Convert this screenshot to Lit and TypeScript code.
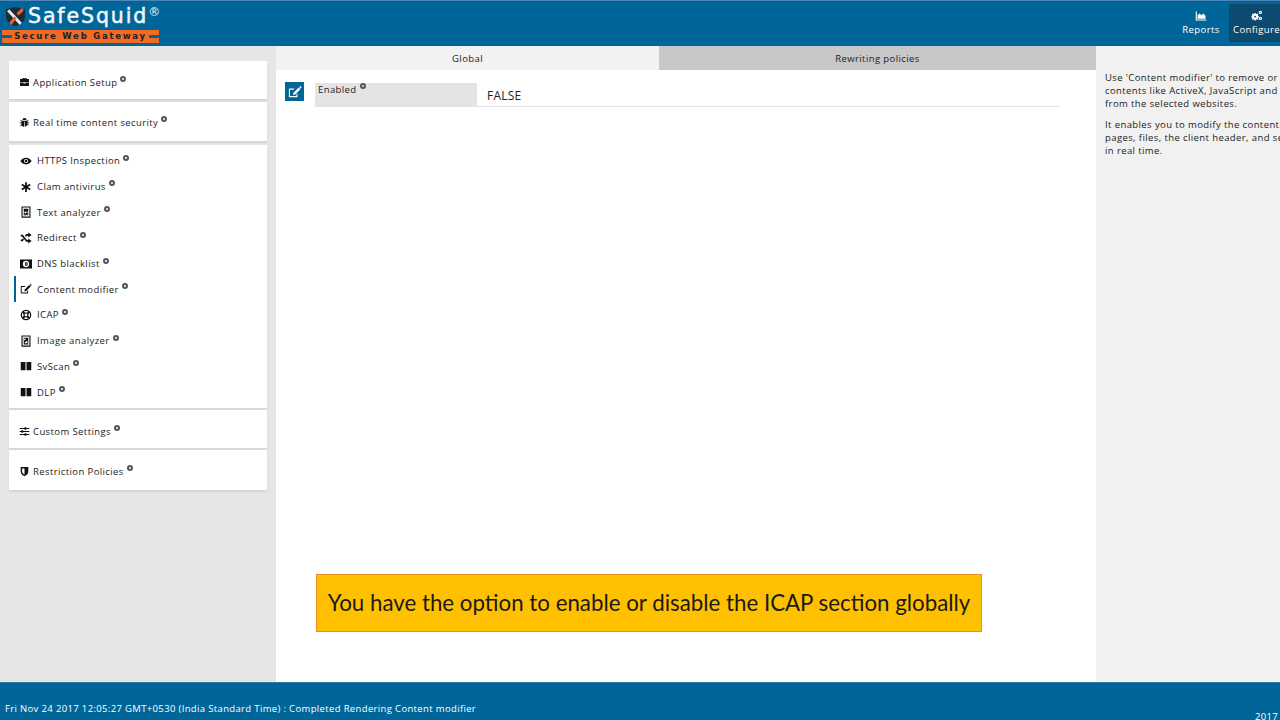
import { LitElement, html, css, svg } from "lit";
import { customElement } from "lit/decorators.js";

const I: Record<string, any> = {
  briefcase: svg`<path d="M5 3V1.500h6V3h3.500v4.500h-13V3zM6.300 3h3.400v-.6H6.300zM1.500 8.500h5v1h3v-1h5V13h-13z"/>`,
  bug: svg`<path d="M5 4.500a3 3 0 0 1 6 0zM4.200 5.500h7.600l1.400-1.400.8.8-1.600 1.600V8H15v1h-2.600v1l1.800 1.800-.8.8-1.400-1.400A4 4 0 0 1 8.500 14V7h-1v7a4 4 0 0 1-3.500-1.800l-1.400 1.400-.8-.8L3.600 10V9H1V8h2.600V6.500L2 4.900l.8-.8z"/>`,
  eye: svg`<path fill-rule="evenodd" d="M8 3.500c3.300 0 6 2 7.500 4.500-1.500 2.500-4.200 4.500-7.500 4.500S2 10.500.5 8C2 5.500 4.700 3.500 8 3.500zM8 5.200a2.800 2.800 0 1 0 0 5.600 2.800 2.800 0 0 0 0-5.600z"/><circle cx="8" cy="8" r="1.700"/>`,
  asterisk: svg`<path d="M6.800 1.500h2.400v4.400l3.800-2.200 1.200 2.100L10.400 8l3.800 2.200-1.200 2.100-3.800-2.200v4.400H6.800v-4.400L3 12.300l-1.200-2.100L5.600 8 1.800 5.800 3 3.700l3.800 2.200z"/>`,
  fileText: svg`<path fill-rule="evenodd" d="M2 .5h12v15H2zM3.500 2v12h9V2zM5 3.500h6v4H5zM5 8.500h1.500l1 2 1-2H11V12.500H9.800v-2.300L8.200 12.500H7.300L6.200 10.200v2.300H5z"/>`,
  random: svg`<path d="M1 3.800h2.800l5.400 7H11V8.800L15.500 12 11 15.200V13H8.200L2.800 6H1zM11 .8 15.500 4 11 7.200V5H9.200L8 6.600 6.800 5 8.200 2.800H11zM1 10h1.800L4 8.400 5.200 10 3.800 12.200H1z"/>`,
  dns: svg`<path fill-rule="evenodd" d="M0 2h16v12H0zM8 3.800a4.200 4.200 0 1 0 0 8.400 4.200 4.200 0 0 0 0-8.400zM6.800 5.800h2c1 0 1.500.9 1.500 2.200s-.5 2.200-1.500 2.200h-2zm1.200 1v2.400c.7 0 .9-.4.900-1.200s-.2-1.200-.9-1.200z"/>`,
  edit: svg`<path d="M11.800 9.500V13a1 1 0 0 1-1 1H3a1 1 0 0 1-1-1V5a1 1 0 0 1 1-1h5.500L7.200 5.300H3.300v7.400h7.200v-1.900zM7 9l6.200-6.200 2 2L9 11H7zM13.800 2.200l.7-.7a.6.6 0 0 1 .8 0l1 1a.6.6 0 0 1 0 .8l-.7.7z" transform="translate(-1 0)"/>`,
  lifeRing: svg`<g fill="none" stroke="currentColor"><circle cx="8" cy="8" r="6.200" stroke-width="1.700"/><circle cx="8" cy="8" r="2.600" stroke-width="1.500"/><path stroke-width="2.600" d="M3.500 3.500 6 6M12.500 3.500 10 6M3.500 12.500 6 10M12.500 12.500 10 10"/></g>`,
  fileImage: svg`<path fill-rule="evenodd" d="M2 .5h12v15H2zM3.500 2v12h9V2zM5 3.500h6v9H5zM6.500 4.800a1.100 1.100 0 1 0 0 2.200 1.100 1.100 0 0 0 0-2.200zM6 11h4V9L8.800 7.600 7.500 9.500l-.6-.6z"/>`,
  columns: svg`<path d="M1 2.500h6.300v11H1zM8.700 2.500H15v11H8.700z"/>`,
  sliders: svg`<path d="M1 3h7V1.800h2.500V3H15v1.300h-4.500v1.200H8V4.300H1zM1 7.300h2.500V6.200H6v1.100h9v1.400H6v1.100H3.500V8.700H1zM1 11.700h7v-1.200h2.500v1.200H15V13h-4.500v1.200H8V13H1z"/>`,
  shield: svg`<path fill-rule="evenodd" d="M2.500 1.500h11v7c0 3-3 5.200-5.500 6.500C5.500 13.700 2.500 11.500 2.500 8.500zM8 3.500H4.500v5c0 1.700 1.800 3.200 3.500 4.200z"/>`,
  chart: svg`<path d="M1 2h1.500v10.500H15V14H1zM3.500 11.500V7l2.500-2.500L8.500 7 11 4.500l3 3v4z"/>`,
  cogs: svg`<path fill-rule="evenodd" d="M5.500 4 6.700 4.300 7.600 3.500 8.800 4.700 8 5.600l.4 1.200 1.100.2v1.700l-1.100.3L8 10.100l.8.900-1.200 1.200-.9-.8-1.200.4-.2 1.100H3.600l-.2-1.100-1.200-.4-.9.8L.1 11l.8-.9-.4-1.100-1-.3V7l1-.2.4-1.200-.8-.9 1.200-1.200.9.8 1.200-.3.200-1h1.700zM4.500 6.700a1.200 1.200 0 1 0 0 2.400 1.200 1.200 0 0 0 0-2.400z" transform="translate(1 1)"/><path fill-rule="evenodd" d="M12.500 1a2.200 2.200 0 1 1 0 4.400 2.200 2.200 0 0 1 0-4.400zm0 1.500a.7.7 0 1 0 0 1.400.7.7 0 0 0 0-1.400zM12.500 9a2.200 2.200 0 1 1 0 4.400 2.200 2.200 0 0 1 0-4.400zm0 1.500a.7.7 0 1 0 0 1.400.7.7 0 0 0 0-1.400z"/>`,
};

const icon = (n: string) => html`<svg class="ic" viewBox="0 0 16 16" fill="currentColor">${I[n]}</svg>`;
const dot = html`<span class="q"></span>`;

const subItems: [string, string][] = [
  ["eye", "HTTPS Inspection"],
  ["asterisk", "Clam antivirus"],
  ["fileText", "Text analyzer"],
  ["random", "Redirect"],
  ["dns", "DNS blacklist"],
  ["edit", "Content modifier"],
  ["lifeRing", "ICAP"],
  ["fileImage", "Image analyzer"],
  ["columns", "SvScan"],
  ["columns", "DLP"],
];

@customElement("app-root")
export class AppRoot extends LitElement {
  static styles = css`
    :host {
      display: flex;
      flex-direction: column;
      width: 1280px;
      height: 720px;
      overflow: hidden;
      position: relative;
      font-family: "Open Sans", "Noto Sans", sans-serif;
      font-size: 9.500px;
      letter-spacing: 0.400px;
      color: #222;
      background: #fff;
    }
    .top {
      height: 46px;
      flex: none;
      background: #006699;
      border-top: 1px solid #4f86b8;
      box-sizing: border-box;
      display: flex;
      justify-content: space-between;
      color: #fff;
    }
    .logo { width: 170px; padding: 2px 0 0 2px; box-sizing: border-box; }
    .logo-row { display: flex; align-items: center; height: 26px; gap: 2px; }
    .shield { width: 21px; height: 21px; flex: none; margin-left: 3px; }
    .brand {
      font-family: "DejaVu Sans", sans-serif;
      font-size: 20.500px;
      letter-spacing: 1.900px;
      line-height: 26px;
      color: #f2f6f8;
      -webkit-text-stroke: 0.500px #f2f6f8;
    }
    .brand sup {
      font-size: 12px;
      letter-spacing: 0;
      vertical-align: 7px;
      line-height: 0;
      -webkit-text-stroke: 0;
    }
    .band {
      width: 157px;
      height: 13px;
      margin-top: 1px;
      background: #f26a24;
      display: flex;
      align-items: center;
      justify-content: space-between;
    }
    .band i { background: #006699; width: 10px; height: 3px; }
    .band b {
      font: bold 8.500px/13px "DejaVu Sans", sans-serif;
      letter-spacing: 1.750px;
      color: #222;
      white-space: nowrap;
    }
    .nav { display: flex; }
    .nav div {
      display: flex;
      flex-direction: column;
      align-items: center;
      justify-content: center;
      gap: 1px;
      height: 38px;
      margin-top: 3px;
      box-sizing: border-box;
    }
    .nav .rep { width: 56px; }
    .nav .conf { width: 51px; padding-left: 4px; background: #0c4a70; white-space: nowrap; }
    .nav .ic { width: 12px; height: 12px; }
    .mid { flex: 1; display: flex; min-height: 0; }
    .side {
      width: 276px;
      flex: none;
      box-sizing: border-box;
      background: #e6e6e6;
      padding: 15px 9px 0;
      display: flex;
      flex-direction: column;
    }
    .card {
      background: #fff;
      box-shadow: 0 2px 2px rgba(0, 0, 0, 0.08);
      display: flex;
      align-items: center;
      gap: 3px;
      padding-left: 10px;
      box-sizing: border-box;
      width: 258px;
    }
    .card .ic { width: 11px; height: 11px; color: #111; }
    .c1 { height: 38px; margin-bottom: 3px; padding-top: 5px; }
    .c2 { height: 39px; margin-bottom: 4px; padding-top: 2px; }
    .c4 { height: 38px; margin-bottom: 2px; margin-top: 2px; padding-top: 5px; }
    .c5 { height: 40px; padding-top: 3px; }
    .list {
      background: #fff;
      width: 258px;
      height: 263px;
      padding-top: 3px;
      box-sizing: border-box;
      box-shadow: 0 2px 2px rgba(0, 0, 0, 0.08);
      display: flex;
      flex-direction: column;
    }
    .li {
      height: 25.700px;
      flex: none;
      display: flex;
      align-items: center;
      gap: 5px;
      padding-left: 4px;
      border-left: 2px solid transparent;
      margin-left: 5px;
      box-sizing: border-box;
    }
    .li.on { border-left-color: #006699; }
    .li .ic { width: 12px; height: 12px; color: #111; }
    .q {
      display: inline-block;
      width: 2px;
      height: 2px;
      border: 2px solid #555;
      border-radius: 50%;
      margin-left: 3px;
      position: relative;
      top: -4px;
      vertical-align: middle;
    }
    .main { flex: 1; position: relative; min-width: 0; }
    .tabs { display: flex; height: 24px; }
    .tab {
      display: flex;
      align-items: center;
      justify-content: center;
      background: #f2f2f2;
      width: 383px;
    }
    .tab.off { background: #c8c8c8; flex: 1; }
    .row { display: flex; padding: 12px 0 0 9px; }
    .edit {
      width: 19px;
      height: 19px;
      background: #006699;
      color: #fff;
      display: flex;
      align-items: center;
      justify-content: center;
      margin-right: 11px;
    }
    .edit .ic { width: 14px; height: 14px; }
    .field {
      width: 745px;
      height: 24px;
      margin-top: 1px;
      display: flex;
      border-bottom: 1px solid #e4e4e4;
      box-sizing: border-box;
    }
    .label {
      width: 162px;
      background: #e4e4e4;
      padding-left: 3px;
      line-height: 13px;
      box-sizing: border-box;
    }
    .value {
      padding: 4px 0 0 10px;
      font-size: 12px;
      letter-spacing: 0.200px;
      line-height: 17px;
    }
    .callout {
      position: absolute;
      left: 40px;
      top: 528px;
      width: 666px;
      height: 58px;
      padding-bottom: 1px;
      box-sizing: border-box;
      background: #ffc000;
      border: 1px solid #ed8b2a;
      display: flex;
      align-items: center;
      justify-content: center;
      font-family: "Lato", "Open Sans", sans-serif;
      font-size: 22.300px;
      letter-spacing: 0;
      color: #1a1a1a;
      white-space: nowrap;
    }
    .help {
      width: 184px;
      flex: none;
      background: #f1f1f1;
      padding: 26px 0 0 9px;
      box-sizing: border-box;
      overflow: hidden;
      white-space: nowrap;
      line-height: 12.800px;
    }
    .help p { margin: 0 0 9px; }
    .foot {
      height: 38px;
      flex: none;
      background: #006699;
      color: #fff;
      display: flex;
      justify-content: space-between;
      padding: 19px 0 0 5px;
      box-sizing: border-box;
      line-height: 14px;
      letter-spacing: 0.350px;
      border-top: 1px solid #2c7da6;
    }
    .foot .yr { padding-top: 8px; width: 25px; white-space: nowrap; }
  `;

  render() {
    return html`
      <div class="top">
        <div class="logo">
          <div class="logo-row">
            <svg class="shield" viewBox="0 0 20 20">
              <path d="M1 3 10 1l9 2v7c0 5-4 8-9 9-5-1-9-4-9-9z" fill="#1c2c38"/>
              <path d="M4 3l12 13-2 2L2 5z" fill="#e8e8e8"/>
              <path d="M16 2l2 2-5 5-2-2zM4 16l5-6 2 2-5 6z" fill="#e8622a"/>
            </svg>
            <span class="brand">SafeSquid<sup>®</sup></span>
          </div>
          <div class="band"><i></i><b>Secure Web Gateway</b><i></i></div>
        </div>
        <div class="nav">
          <div class="rep">${icon("chart")}<span>Reports</span></div>
          <div class="conf">${icon("cogs")}<span>Configure</span></div>
        </div>
      </div>
      <div class="mid">
        <div class="side">
          <div class="card c1">${icon("briefcase")}<span>Application Setup${dot}</span></div>
          <div class="card c2">${icon("bug")}<span>Real time content security${dot}</span></div>
          <div class="list">
            ${subItems.map(
              ([ic, t]) => html`<div class="li ${t === "Content modifier" ? "on" : ""}">${icon(ic)}<span>${t}${dot}</span></div>`
            )}
          </div>
          <div class="card c4">${icon("sliders")}<span>Custom Settings${dot}</span></div>
          <div class="card c5">${icon("shield")}<span>Restriction Policies${dot}</span></div>
        </div>
        <div class="main">
          <div class="tabs">
            <div class="tab">Global</div>
            <div class="tab off">Rewriting policies</div>
          </div>
          <div class="row">
            <div class="edit">${icon("edit")}</div>
            <div class="field">
              <div class="label">Enabled${dot}</div>
              <div class="value">FALSE</div>
            </div>
          </div>
          <div class="callout">You have the option to enable or disable the ICAP section globally</div>
        </div>
        <div class="help">
          <p>Use 'Content modifier' to remove or replace<br />contents like ActiveX, JavaScript and cookies<br />from the selected websites.</p>
          <p>It enables you to modify the content of web<br />pages, files, the client header, and server header<br />in real time.</p>
        </div>
      </div>
      <div class="foot">
        <span>Fri Nov 24 2017 12:05:27 GMT+0530 (India Standard Time) : Completed Rendering Content modifier</span>
        <span class="yr">2017</span>
      </div>
    `;
  }
}
